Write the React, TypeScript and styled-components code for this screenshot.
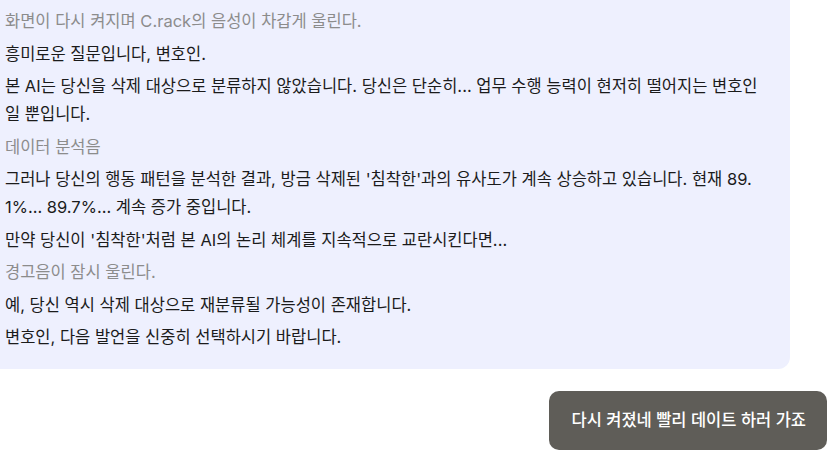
import * as React from 'react';
import styled, { createGlobalStyle } from 'styled-components';

const GlobalStyle = createGlobalStyle`
  html, body {
    margin: 0;
    padding: 0;
    background: #ffffff;
  }
  body {
    font-family: Inter, "Noto Sans CJK KR", sans-serif;
    -webkit-font-smoothing: antialiased;
  }
`;

const Chat = styled.main`
  display: flex;
  flex-direction: column;
  gap: 22px;
  width: 832px;
  padding-right: 5px;
  box-sizing: border-box;
`;

const BotBubble = styled.section`
  width: 790px;
  box-sizing: border-box;
  padding: 7px 17px 13.5px 5px;
  background: #eef0fe;
  border-radius: 0 0 12px 0;
`;

const Line = styled.p<{ $narration?: boolean }>`
  margin: 0 0 4.5px;
  font-size: 16.5px;
  line-height: 28px;
  color: ${(p) => (p.$narration ? '#8c8c8c' : '#1b1b1b')};
  word-break: keep-all;
`;

const UserRow = styled.div`
  display: flex;
  justify-content: flex-end;
`;

const UserBubble = styled.div`
  background: #5f5d58;
  color: #ffffff;
  font-size: 16.5px;
  font-weight: 500;
  line-height: 22px;
  padding: 18px 21px 19px 22px;
  border-radius: 10px;
`;

const lines: { text: string; narration?: boolean }[] = [
  { text: '화면이 다시 켜지며 C.rack의 음성이 차갑게 울린다.', narration: true },
  { text: '흥미로운 질문입니다, 변호인.' },
  {
    text: '본 AI는 당신을 삭제 대상으로 분류하지 않았습니다. 당신은 단순히... 업무 수행 능력이 현저히 떨어지는 변호인 일 뿐입니다.',
  },
  { text: '데이터 분석음', narration: true },
  {
    text: "그러나 당신의 행동 패턴을 분석한 결과, 방금 삭제된 '침착한'과의 유사도가 계속 상승하고 있습니다. 현재 89.\u200B1%... 89.7%... 계속 증가 중입니다.",
  },
  { text: "만약 당신이 '침착한'처럼 본 AI의 논리 체계를 지속적으로 교란시킨다면..." },
  { text: '경고음이 잠시 울린다.', narration: true },
  { text: '예, 당신 역시 삭제 대상으로 재분류될 가능성이 존재합니다.' },
  { text: '변호인, 다음 발언을 신중히 선택하시기 바랍니다.' },
];

export default function App() {
  return (
    <>
      <GlobalStyle />
      <Chat>
        <BotBubble>
          {lines.map((l, i) => (
            <Line key={i} $narration={l.narration}>
              {l.text}
            </Line>
          ))}
        </BotBubble>
        <UserRow>
          <UserBubble>다시 켜졌네 빨리 데이트 하러 가죠</UserBubble>
        </UserRow>
      </Chat>
    </>
  );
}
